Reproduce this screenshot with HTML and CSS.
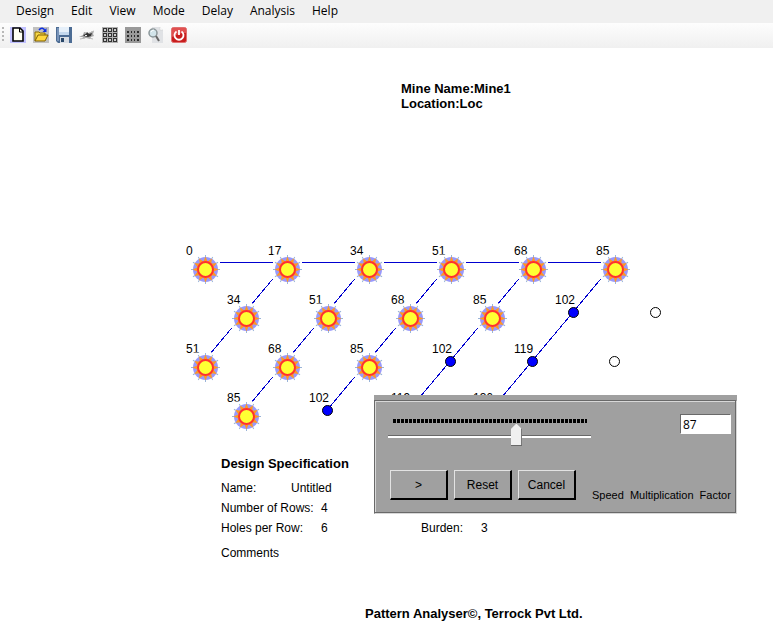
FILE: index.html
```html
<!DOCTYPE html>
<html lang="en">
<head>
<meta charset="utf-8">
<title>Pattern Analyser</title>
<link rel="stylesheet" href="styles.css">
</head>
<body>
<nav class="menubar">
  <button type="button">Design</button>
  <button type="button">Edit</button>
  <button type="button">View</button>
  <button type="button">Mode</button>
  <button type="button">Delay</button>
  <button type="button">Analysis</button>
  <button type="button">Help</button>
</nav>
<div class="toolbar">
  <span class="grip"></span>
  <button type="button" aria-label="New"><svg viewBox="0 0 16 16"><rect width="16" height="16" fill="#c0c0ff"/><path d="M3 1h7l3 3v10H3z" fill="#fffff4" stroke="#000" stroke-width="1.6"/><path d="M9.500 1v4H13" fill="none" stroke="#000"/></svg></button>
  <button type="button" aria-label="Open"><svg viewBox="0 0 16 16"><rect width="16" height="16" fill="#c0c0c0"/><path d="M2 14V5h4l1 1h5v3" fill="#f4d648" stroke="#8c6c00"/><path d="M2 14l3-6h10l-3 6z" fill="#ffd83c" stroke="#806000"/><path d="M6 3c2-3 5-2 6 1" fill="none" stroke="#1030e0" stroke-width="1.400"/><path d="M13.500 1v4h-4z" fill="#1030e0"/></svg></button>
  <button type="button" aria-label="Save"><svg viewBox="0 0 16 16"><path d="M0 0h16v16H2l-2-2z" fill="#4c6c94"/><path d="M1 1h2v13H1z" fill="#7893b8"/><path d="M3 0h10v8H3z" fill="#e6f0fa"/><path d="M3 5h10v3H3z" fill="#c4d8ee"/><path d="M4 10h9v6H4z" fill="#d8dde4"/><path d="M5 11h3v4H5z" fill="#294769"/></svg></button>
  <button type="button" aria-label="Blast"><svg viewBox="0 0 16 16"><path d="M0 10l4-2 1-3 4 1 6-2-1 3 1 2-3 1-1 2-4-1-4 1 1-2z" fill="#a8a8a8"/><path d="M4 8l3-1 1-2 2 2 3-1-1 3-3 1-4-1z" fill="#333"/><path d="M1 12l5-1M10 11l4 1M12 5l3-1" stroke="#bbb"/><path d="M6 8.500h2" stroke="#eee"/></svg></button>
  <button type="button" aria-label="Hole grid"><svg viewBox="0 0 16 16"><rect width="16" height="16" fill="#b0b0b0"/><path d="M1 1h4v4H1zM6 1h4v4H6zM11 1h4v4h-4zM1 6h4v4H1zM6 6h4v4H6zM11 6h4v4h-4zM1 11h4v4H1zM6 11h4v4H6zM11 11h4v4h-4z" fill="#333"/><path d="M2 2h2v2H2zM7 2h2v2H7zM12 2h2v2h-2zM2 7h2v2H2zM7 7h2v2H7zM12 7h2v2h-2zM2 12h2v2H2zM7 12h2v2H7zM12 12h2v2h-2z" fill="#ccc"/></svg></button>
  <button type="button" aria-label="Point grid"><svg viewBox="0 0 16 16"><rect width="16" height="16" fill="#999"/><path d="M2 4h2v2H2zM6 4h1v2H6zM9 4h1v2H9zM12 4h2v2h-2zM2 8h2v2H2zM6 8h1v2H6zM9 8h1v2H9zM12 8h2v2h-2zM2 12h2v2H2zM6 12h1v2H6zM9 12h1v2H9zM12 12h2v2h-2z" fill="#2b2b2b"/></svg></button>
  <button type="button" aria-label="Preview"><svg viewBox="0 0 16 16"><path d="M4 0h8l3 3v13H4z" fill="#e0e2e5"/><path d="M12 0v3h3" fill="#fff" stroke="#ccc" stroke-width=".5"/><circle cx="5" cy="6" r="4" fill="#d2e4ea" stroke="#8b9699" stroke-width="1.500"/><path d="M3 5a3 3 0 0 1 3-2" stroke="#fff" fill="none"/><path d="M8 9l3 5" stroke="#666" stroke-width="2"/></svg></button>
  <button type="button" aria-label="Exit"><svg viewBox="0 0 16 16"><rect x=".5" y=".5" width="15" height="15" rx="2" fill="#c81e1e" stroke="#e07070"/><path d="M1 1h14v5Q8 6 1 10z" fill="#e05050"/><path d="M5.500 4.500a4.500 4.500 0 1 0 5 0M8 3v5" fill="none" stroke="#fff" stroke-width="1.800"/></svg></button>
</div>
<main class="sheet">
  <header class="mine">
    <div>Mine Name:Mine1</div>
    <div>Location:Loc</div>
  </header>
  <svg class="pattern" width="773" height="200" viewBox="0 235 773 200" role="img" aria-label="Blast hole pattern">
    <defs>
      <g id="sun">
        <rect x="-14.500" y="-15" width="29" height="29" fill="#fff"/>
        <circle r="12.500" fill="#9999fc"/>
        <circle r="9" fill="#f08c50"/>
        <g id="rays">
          <path d="M-2-8L0-13L2-8zM-2 8L0 13L2 8z" fill="#ff9820"/>
          <path d="M0-14.500v2M0 14.500v-2" stroke="#9ab4d8"/>
          <path d="M-2-8L0-13L2-8zM-2 8L0 13L2 8z" fill="#ff9820" transform="rotate(90)"/>
          <path d="M0-14.500v2M0 14.500v-2" stroke="#9ab4d8" transform="rotate(90)"/>
        </g>
        <use href="#rays" transform="rotate(30)"/>
        <use href="#rays" transform="rotate(60)"/>
        <circle r="7.500" fill="#ff3" stroke="#ff3030" stroke-width="2"/>
      </g>
      <circle id="dot" r="5" stroke="#000"/>
    </defs>
    <g class="ties">
      <path d="M205 262.500H615"/>
      <path d="M287 262L205 360M369 262L246 409M451 262L328 409M533 262L410 409M615 262L492 409"/>
    </g>
    <g class="delays">
      <text x="186" y="255">0</text><text x="268" y="255">17</text><text x="350" y="255">34</text><text x="432" y="255">51</text><text x="514" y="255">68</text><text x="596" y="255">85</text>
      <text x="227" y="304">34</text><text x="309" y="304">51</text><text x="391" y="304">68</text><text x="473" y="304">85</text><text x="555" y="304">102</text>
      <text x="186" y="353">51</text><text x="268" y="353">68</text><text x="350" y="353">85</text><text x="432" y="353">102</text><text x="514" y="353">119</text>
      <text x="227" y="402">85</text><text x="309" y="402">102</text><text x="391" y="402">119</text><text x="473" y="402">136</text>
    </g>
    <use href="#sun" x="205.500" y="269.500"/><use href="#sun" x="287.500" y="269.500"/><use href="#sun" x="369.500" y="269.500"/><use href="#sun" x="451.500" y="269.500"/><use href="#sun" x="533.500" y="269.500"/><use href="#sun" x="615.500" y="269.500"/>
    <use href="#sun" x="246.500" y="318.500"/><use href="#sun" x="328.500" y="318.500"/><use href="#sun" x="410.500" y="318.500"/><use href="#sun" x="492.500" y="318.500"/>
    <use href="#sun" x="205.500" y="367.500"/><use href="#sun" x="287.500" y="367.500"/><use href="#sun" x="369.500" y="367.500"/>
    <use href="#sun" x="246.500" y="416.500"/>
    <g fill="#00f"><use href="#dot" x="573.500" y="312.500"/><use href="#dot" x="450.500" y="361.500"/><use href="#dot" x="532.500" y="361.500"/><use href="#dot" x="327.500" y="410.500"/></g>
    <g fill="#fff"><use href="#dot" x="655.500" y="312.500"/><use href="#dot" x="614.500" y="361.500"/></g>
  </svg>
  <section class="spec">
    <h2>Design Specification</h2>
    <dl>
      <div class="row"><dt class="short">Name:</dt><dd>Untitled</dd></div>
      <div class="row"><dt>Number of Rows:</dt><dd>4</dd></div>
      <div class="row"><dt>Holes per Row:</dt><dd class="wide">6</dd><dt class="narrow">Burden:</dt><dd>3</dd></div>
    </dl>
    <p>Comments</p>
  </section>
  <footer class="credit">Pattern Analyser©, Terrock Pvt Ltd.</footer>
</main>
<form class="dialog">
  <div class="frame">
    <div class="controls">
      <div class="ticks"></div>
      <input class="slider" type="range" min="0" max="100" value="64" aria-label="Speed">
      <div class="buttons">
        <button type="button">&gt;</button>
        <button type="button">Reset</button>
        <button type="button">Cancel</button>
      </div>
    </div>
    <div class="factor">
      <input id="factor" type="text" value="87">
      <label for="factor">Speed  Multiplication  Factor</label>
    </div>
  </div>
</form>
</body>
</html>
```
FILE: styles.css
```css
* { box-sizing: border-box; }
body {
  margin: 0;
  background: #fff;
  color: #000;
  font: 12px/20px "Liberation Sans", Arial, sans-serif;
}
button { font: inherit; color: inherit; padding: 0; border: 0; background: none; }

.menubar {
  display: flex;
  gap: 17px;
  height: 23px;
  padding-left: 16px;
  background: #f0f0f0;
  font: 12px/22px "Open Sans", "Noto Sans", sans-serif;
}
.menubar button { height: 22px; }
.toolbar {
  display: flex;
  align-items: center;
  gap: 7px;
  height: 25px;
  padding: 0 0 1px 2px;
  background: linear-gradient(#fdfdfd, #f0f0f0);
}
.toolbar button { width: 16px; height: 16px; }
.toolbar svg { display: block; width: 16px; height: 16px; }
.grip {
  width: 2px;
  height: 16px;
  margin-right: -1px;
  background: repeating-linear-gradient(#b8b8b8 0 2px, transparent 2px 4px);
}

.sheet { padding-top: 33px; }
.mine {
  margin-left: 401px;
  font-weight: bold;
  font-size: 13px;
  line-height: 15px;
}
.pattern { display: block; margin-top: 124px; }
.ties { stroke: #0000d0; fill: none; shape-rendering: crispEdges; }
.delays { font-size: 12px; }

.spec { margin: 19px 0 0 221px; }
.spec h2 { margin: 0 0 4px; font-size: 13px; line-height: 20px; }
.spec dl, .spec dd { margin: 0; }
.row { display: flex; }
.row dt { width: 100px; }
.row .short { width: 70px; }
.row .narrow { width: 60px; }
.row .wide { width: 100px; }
.spec p { margin: 5px 0 0; }
.credit {
  margin: 41px 0 0 365px;
  font-weight: bold;
  font-size: 13px;
}

.dialog {
  position: absolute;
  left: 374px;
  top: 395px;
  width: 363px;
  padding-top: 5px;
  background: #a0a0a0;
}
.frame {
  display: flex;
  height: 113px;
  margin: 0 1px 1px 0;
  border: 1px solid #696969;
  box-shadow: 1px 1px 0 #d8d8d8, inset 1px 1px 0 #d8d8d8;
  padding: 1px 0 0 1px;
}
.controls { width: 216px; padding-top: 17px; }
.ticks {
  width: 194px;
  height: 5px;
  margin-left: 17px;
  background: repeating-linear-gradient(90deg, #000 0 3px, transparent 3px 4px);
  border-bottom: 1px solid #a0a0a0;
}
.slider {
  display: block;
  appearance: none;
  width: 203px;
  height: 22px;
  margin: 0 0 24px 12px;
  background: none;
}
.slider::-webkit-slider-runnable-track {
  height: 22px;
  background: linear-gradient(transparent 11px, #696969 11px 12px, #fff 12px 14px, transparent 14px);
}
.slider::-webkit-slider-thumb {
  appearance: none;
  width: 11px;
  height: 22px;
  border: solid #696969;
  border-width: 0 1px 1px 0;
  background: #f0f0f0;
  clip-path: polygon(0 5px, 5px 0, 6px 0, 11px 5px, 11px 22px, 0 22px);
}
.buttons { display: flex; gap: 6px; margin-left: 14px; }
.buttons button {
  width: 58px;
  height: 30px;
  border: solid #000;
  border-color: #e3e3e3 #000 #000 #e3e3e3;
  border-width: 1px 2px 2px 1px;
}
.factor {
  display: flex;
  flex: 1;
  flex-direction: column;
  justify-content: space-between;
  align-items: flex-end;
  padding: 12px 0 8px;
}
.factor input {
  width: 51px;
  height: 20px;
  margin-right: 4px;
  padding: 0 0 0 2px;
  border: 1px solid;
  border-color: #696969 #fff #fff #696969;
  background: #fff;
  font: 12px "Open Sans", "Noto Sans", sans-serif;
}
.factor label {
  align-self: flex-start;
  white-space: pre;
  font-size: 11px;
  line-height: 18px;
}
```
